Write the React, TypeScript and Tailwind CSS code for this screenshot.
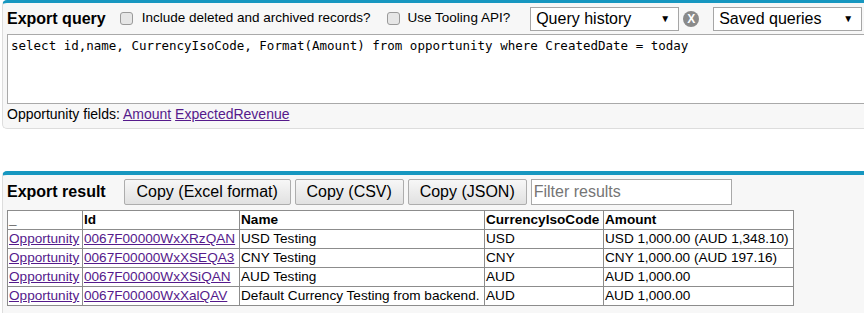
import React from 'react';

const rows = [
  { id: '0067F00000WxXRzQAN', name: 'USD Testing', cur: 'USD', amount: 'USD 1,000.00 (AUD 1,348.10)' },
  { id: '0067F00000WxXSEQA3', name: 'CNY Testing', cur: 'CNY', amount: 'CNY 1,000.00 (AUD 197.16)' },
  { id: '0067F00000WxXSiQAN', name: 'AUD Testing', cur: 'AUD', amount: 'AUD 1,000.00' },
  { id: '0067F00000WxXalQAV', name: 'Default Currency Testing from backend.', cur: 'AUD', amount: 'AUD 1,000.00' },
];

const Checkbox: React.FC = () => (
  <span className="inline-block w-[13px] h-[13px] rounded-[3px] border border-[#9a9a9a] bg-[#e6e6e6]" />
);

const Select: React.FC<{ label: string }> = ({ label }) => (
  <div className="flex items-center justify-between w-[149px] h-[24px] bg-white border border-[#a6a6a6] pl-[5px] pr-[8px] text-[16px] text-black">
    <span>{label}</span>
    <span className="text-[10px] leading-none">▼</span>
  </div>
);

const CopyButton: React.FC<{ label: string; w: string }> = ({ label, w }) => (
  <button className={`${w} h-[26px] border border-[#adadad] rounded-[2px] bg-gradient-to-b from-[#f7f7f7] to-[#e1e1e1] text-[16px] text-black`}>
    {label}
  </button>
);

const cell = 'h-[19px] border border-[#8c8c8c] px-[1px] py-0 text-left align-middle whitespace-nowrap overflow-hidden';
const link = 'text-[#551a8b] underline';

export default function App() {
  return (
    <div className="w-[864px] h-[313px] overflow-hidden bg-white font-['Liberation_Sans',Arial,sans-serif] text-black">
      {/* query panel */}
      <div className="ml-[2px] w-[900px] bg-[#f7f7f7] border-t-[3px] border-t-[#1797c0] border-l border-b border-[#dddddd] rounded-tl-[5px] rounded-bl-[5px] pl-[4px] pb-[5px]">
        <div className="flex items-center h-[31px]">
          <span className="text-[16px] font-bold">Export query</span>
          <span className="ml-[14px] flex items-center"><Checkbox /></span>
          <span className="ml-[9px] text-[13.5px]">Include deleted and archived records?</span>
          <span className="ml-[16px] flex items-center"><Checkbox /></span>
          <span className="ml-[8px] text-[13.5px]">Use Tooling API?</span>
          <div className="ml-[20px]"><Select label="Query history" /></div>
          <span className="ml-[4px] w-[16px] h-[16px] rounded-full bg-[#8a8a8a] text-white text-[12px] font-bold leading-[16px] text-center">X</span>
          <div className="ml-[14px]"><Select label="Saved queries" /></div>
        </div>
        <div className="h-[70px] bg-white border border-[#a9a9a9] px-[3px] pt-[3px] font-['DejaVu_Sans_Mono',monospace] text-[12.5px] leading-[16px] whitespace-pre">
          select id,name, CurrencyIsoCode, Format(Amount) from opportunity where CreatedDate = today
        </div>
        <div className="text-[14px] leading-[18px] mt-[1px]">
          Opportunity fields: <span className={link}>Amount</span> <span className={link}>ExpectedRevenue</span>
        </div>
      </div>

      {/* result panel */}
      <div className="mt-[42px] ml-[2px] w-[900px] h-[200px] bg-[#f7f7f7] border-t-4 border-t-[#1797c0] border-l border-[#dddddd] rounded-tl-[5px] pl-[4px] pt-[4px]">
        <div className="flex items-center h-[26px]">
          <span className="text-[16px] font-bold">Export result</span>
          <div className="ml-[18px] flex gap-[4px]">
            <CopyButton label="Copy (Excel format)" w="w-[167px]" />
            <CopyButton label="Copy (CSV)" w="w-[109px]" />
            <CopyButton label="Copy (JSON)" w="w-[119px]" />
            <input
              placeholder="Filter results"
              className="w-[201px] h-[26px] bg-white border border-[#a9a9a9] px-[2px] text-[16px] placeholder:text-[#757575] outline-none"
            />
          </div>
        </div>
        <table className="mt-[5px] table-fixed w-[787px] border-collapse bg-white text-[13.6px] leading-[16px]">
          <colgroup>
            <col className="w-[75px]" />
            <col className="w-[157px]" />
            <col className="w-[245px]" />
            <col className="w-[119px]" />
            <col className="w-[190px]" />
          </colgroup>
          <thead>
            <tr>
              <th className={`${cell} align-bottom font-bold`}>_</th>
              <th className={`${cell} font-bold`}>Id</th>
              <th className={`${cell} font-bold`}>Name</th>
              <th className={`${cell} font-bold`}>CurrencyIsoCode</th>
              <th className={`${cell} font-bold`}>Amount</th>
            </tr>
          </thead>
          <tbody>
            {rows.map((r) => (
              <tr key={r.id}>
                <td className={cell}><span className={link}>Opportunity</span></td>
                <td className={cell}><span className={link}>{r.id}</span></td>
                <td className={cell}>{r.name}</td>
                <td className={cell}>{r.cur}</td>
                <td className={cell}>{r.amount}</td>
              </tr>
            ))}
          </tbody>
        </table>
      </div>
    </div>
  );
}
